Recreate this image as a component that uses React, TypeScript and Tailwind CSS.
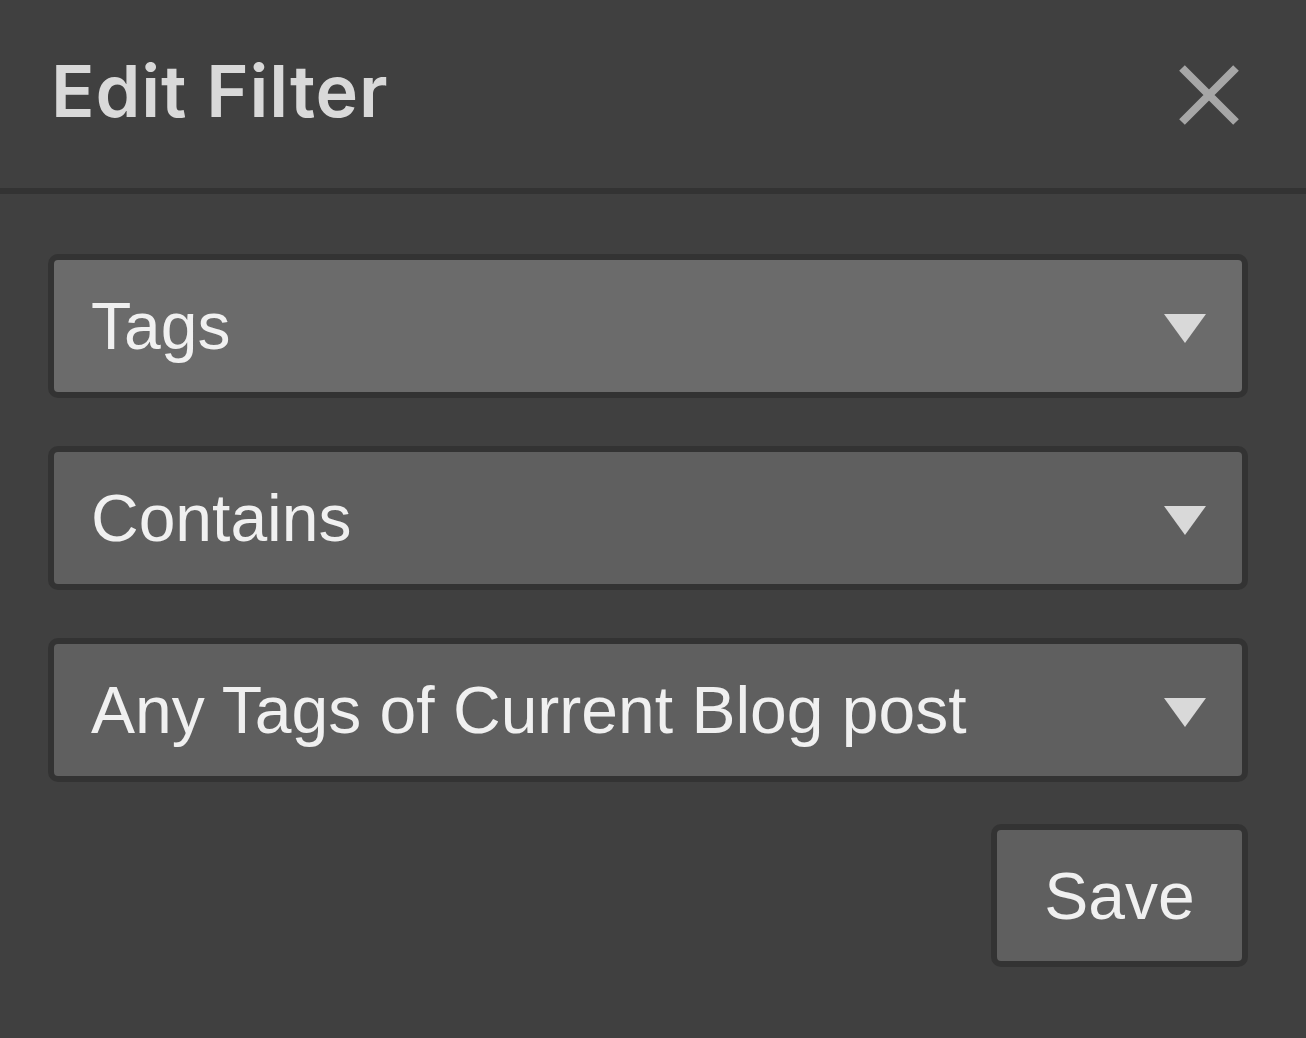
const fields = [
  { label: 'Tags', bg: 'bg-[#6b6b6b]' },
  { label: 'Contains', bg: 'bg-[#5f5f5f]' },
  { label: 'Any Tags of Current Blog post', bg: 'bg-[#5f5f5f]' },
]

function Caret() {
  return (
    <svg width="42" height="29" viewBox="0 0 42 29" className="mt-[4px] shrink-0">
      <polygon points="0,0 42,0 21,29" fill="#d9d9d9" />
    </svg>
  )
}

export default function App() {
  return (
    <div className="min-h-screen w-full bg-[#404040] font-['Liberation_Sans',Arial,sans-serif]">
      <div className="box-content flex h-[188px] items-center justify-between border-b-[6px] border-[#333333] pl-[51px] pr-[67px]">
        <h1 className="-mt-[6px] font-['Inter',sans-serif] text-[72px] font-semibold leading-none tracking-[0.012em] text-[#d9d9d9]">
          Edit Filter
        </h1>
        <button className="mt-[1px]">
          <svg width="60" height="60" viewBox="0 0 60 60">
            <path d="M3 3 L57 57 M57 3 L3 57" stroke="#a6a6a6" strokeWidth="8" />
          </svg>
        </button>
      </div>

      <div className="flex flex-col gap-[48px] pl-[48px] pr-[58px] pt-[60px]">
        {fields.map((f) => (
          <div
            key={f.label}
            className={`flex h-[144px] items-center justify-between rounded-[10px] border-[6px] border-[#333333] ${f.bg} pl-[37px] pr-[36px]`}
          >
            <span className="text-[66px] leading-none text-[#f0f0f0]">{f.label}</span>
            <Caret />
          </div>
        ))}
      </div>

      <div className="flex justify-end pr-[58px] pt-[42px]">
        <button className="h-[143px] w-[257px] rounded-[10px] border-[6px] border-[#333333] bg-[#5f5f5f] text-[66px] leading-none text-[#f0f0f0]">
          Save
        </button>
      </div>
    </div>
  )
}
